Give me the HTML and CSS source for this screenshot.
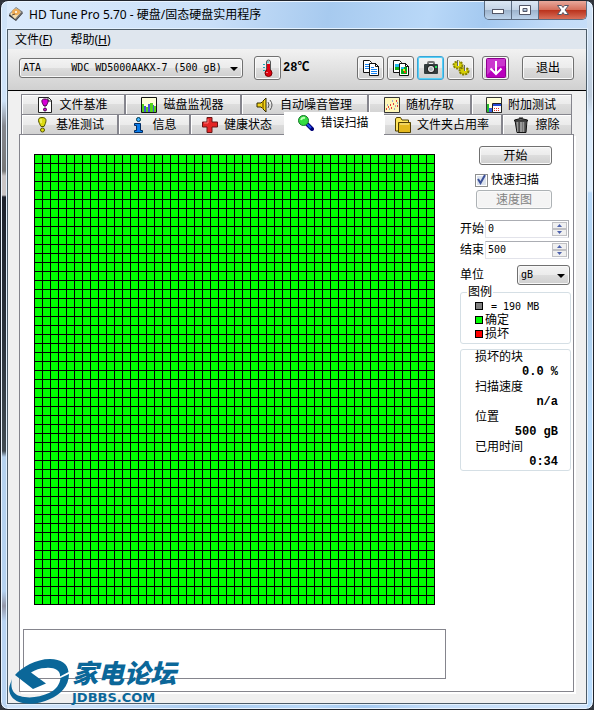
FILE: index.html
```html
<!DOCTYPE html>
<html lang="zh-CN">
<head>
<meta charset="utf-8">
<title>HD Tune Pro 5.70</title>
<link rel="stylesheet" href="styles.css">
</head>
<body>
<div class="window">
  <header class="titlebar">
    <svg class="app-icon" viewBox="0 0 16 16"><path d="M1 9 8 2l7 5-7 8-7-5z" fill="#333"/><path d="M1 8 8 1l7 5-7 8z" fill="#777"/><path d="M2 8 8 2l5 4-6 7z" fill="#f3dcae"/><ellipse cx="8" cy="6" rx="4" ry="3" fill="#edaa54"/><circle cx="8" cy="6" r="1" fill="#fff"/><path d="m4 9 3-1" stroke="#654" stroke-width="1"/></svg>
    <h1>HD Tune Pro 5.70 - 硬盘/固态硬盘实用程序</h1>
    <div class="controls">
      <button aria-label="最小化"><svg viewBox="0 0 14 12"><rect x="1.500" y="5.500" width="11" height="4" fill="#fff" stroke="#535666"/></svg></button>
      <button aria-label="最大化"><svg viewBox="0 0 14 12"><path fill-rule="evenodd" d="M1.500 1.500h11v9h-11zm3.500 3v3h4v-3z" fill="#fff" stroke="#535666"/></svg></button>
      <button class="close" aria-label="关闭"><svg viewBox="0 0 14 12"><path d="M1.500 1.500h4L7 3.500l1.500-2h4L9 6l3.500 4.500h-4L7 8.500l-1.500 2h-4L5 6z" fill="#fff" stroke="#535666"/></svg></button>
    </div>
  </header>
  <main class="client">
    <nav class="menu"><button>文件(<u>F</u>)</button><button>帮助(<u>H</u>)</button></nav>
    <div class="toolbar">
      <div class="combo drive">
        <select aria-label="硬盘"><option>ATA&nbsp;&nbsp;&nbsp;&nbsp;&nbsp;WDC WD5000AAKX-7 (500 gB)</option></select>
        <svg viewBox="0 0 8 4"><path d="M0 0h8L4 4z"/></svg>
      </div>
      <button class="tool" aria-label="温度"><svg viewBox="0 0 16 18"><rect x="6.500" y="1" width="4" height="12" rx="2" fill="#ddd" stroke="#555"/><circle cx="8.500" cy="14" r="3.500" fill="#e00010" stroke="#700"/><path d="M8.500 5v9" stroke="#e00010" stroke-width="3"/><path d="M3 5.500h2M3 8.500h2M3 11.500h2" stroke="#18a7b5"/><path d="M8 2v2" stroke="#21c2d0"/><path d="M7 13v1" stroke="#fff"/></svg></button>
      <span class="temp">28℃</span>
      <div class="tools">
        <button class="tool" aria-label="复制文本"><svg viewBox="0 0 18 16"><path d="M1.500.5h6l2 2v10h-8z" fill="#fff" stroke="#111"/><path d="M3 4.500h4M3 6.500h4M3 8.500h4" stroke="#1683f3"/><path d="M7.500 3.500h6l3 3v9h-9z" fill="#fff" stroke="#111"/><path d="M13.500 3v3.500H17" fill="none" stroke="#111"/><path d="M9 7.500h3M9 9.500h6M9 11.500h6M9 13.500h6" stroke="#1683f3"/></svg></button>
        <button class="tool" aria-label="复制图像"><svg viewBox="0 0 18 16"><path d="M1.500.5h6l2 2v10h-8z" fill="#fff" stroke="#111"/><path d="M3 4h4v6H3z" fill="#25b9ed"/><path d="M3 7h4v3H3z" fill="#13af18"/><path d="M7.500 3.500h6l3 3v9h-9z" fill="#fff" stroke="#111"/><path d="M13.500 3v3.500H17" fill="none" stroke="#111"/><path d="M9 7h6v7H9z" fill="#09aa19"/><path d="M9 7h3v2H9z" fill="#25b9ed"/><path d="M11 9h2v2h-2z" fill="#f2dd16"/><path d="M12 11h2v2h-2z" fill="#ed3a12"/></svg></button>
        <button class="tool focused" aria-label="截图"><svg viewBox="0 0 18 16"><path d="M6 5V3q0-1 1-1h4q1 0 1 1v2" fill="none" stroke="#777" stroke-width="2"/><rect x="2" y="4" width="14" height="10" rx="1" fill="#333c3d"/><circle cx="9" cy="9" r="4" fill="#222"/><circle cx="9" cy="9" r="3" fill="#eee"/><circle cx="9" cy="9" r="2" fill="#aeb8bb"/><path d="M13 6h2v2h-2z" fill="#1ee35b"/></svg></button>
        <button class="tool" aria-label="选项"><svg viewBox="0 0 18 16"><ellipse cx="6" cy="5" rx="4.500" ry="3.500" fill="#d6cf05"/><ellipse cx="6" cy="5" rx="4.500" ry="3.500" fill="none" stroke="#898500" stroke-width="2" stroke-dasharray="2 1"/><ellipse cx="12" cy="11" rx="4.500" ry="3.500" fill="#d6cf05"/><ellipse cx="12" cy="11" rx="4.500" ry="3.500" fill="none" stroke="#817b00" stroke-width="2" stroke-dasharray="2 1"/><path d="M5.500 0v6M12.500 5v6" stroke="#666"/><path d="M6.500 1v5M13.500 6v5" stroke="#eee"/></svg></button>
        <button class="tool save" aria-label="保存"><svg viewBox="0 0 20 20"><rect x=".5" y=".5" width="19" height="19" rx="1" fill="#b900bd" stroke="#8e008f"/><path d="M1 1h18v7Q8 8 1 17z" fill="#d65cd8" opacity=".6"/><path d="M10 3v12M4.500 10.500 10 16l5.500-5.500" fill="none" stroke="#fff" stroke-width="2"/></svg></button>
        <button class="exit">退出</button>
      </div>
    </div>
    <section class="body">
      <div class="tabs" role="tablist">
        <div class="tab-row first">
          <button role="tab"><svg viewBox="0 0 16 16"><path d="M1.500.5h10l3 3v12h-13z" fill="#fff" stroke="#222"/><path d="M11 0v4h4" fill="none" stroke="#222"/><path d="M8 2c5 0 3 4 1 7H7C5 6 3 2 8 2z" fill="#d900d8" stroke="#410041"/><circle cx="8" cy="12.500" r="1.500" fill="#d900d8" stroke="#410041"/></svg>文件基准</button>
          <button role="tab"><svg viewBox="0 0 16 16"><path d="M.5.5h15v15H.5z" fill="#ffffd8" stroke="#111"/><path d="M1 7h2v8H1zM5 10h2v5H5zM9 6h3v9H9zM13 9h2v6h-2z" fill="#53d31a"/><path d="M3 9h2v6H3zM7 7h2v8H7zM12 8h1v7h-1z" fill="#4750d8"/></svg>磁盘监视器</button>
          <button role="tab"><svg class="speaker" viewBox="0 0 18 16"><path d="M1 6h4l5-5v14L5 10H1z" fill="#f4d51c" stroke="#332a00"/><path d="M7 4v8" stroke="#a88700" stroke-width="2"/><path d="M12 5q2 3 0 6M14 3q4 5 0 10" fill="none" stroke="#555"/></svg>自动噪音管理</button>
          <button role="tab"><svg viewBox="0 0 16 16"><path d="M.5.5h15v15H.5z" fill="#fff8b8" stroke="#333"/><path d="M2 12h1M4 10h1M7 11h1M6 8h1M9 7h1M12 4h1M13 9h1" stroke="#e04040" stroke-width="2"/><path d="M3 8h1M5 12h1M8 4h1M11 9h1M13 6h1M10 12h1" stroke="#405bdc"/></svg>随机存取</button>
          <button role="tab"><svg viewBox="0 0 16 16"><path d="M.5.5h15v15H.5z" fill="#ffffd8" stroke="#333"/><path d="M1 7h2v8H1z" fill="#22bd2c"/><path d="M3 11h3v4H3z" fill="#345de1"/><path d="M6.500 6.500h9v9h-9z" fill="#fff" stroke="#222"/><path d="M7 7h8v2H7z" fill="#254bd5"/><path d="M8 11.500h1m1 0h1m1 0h1M8 13.500h1m1 0h1m1 0h1" stroke="#d32"/></svg>附加测试</button>
        </div>
        <div class="tab-row second">
          <button role="tab"><svg viewBox="0 0 16 16"><path d="M8 .5c6 0 4 5 2 9H7C5 6 2 .5 8 .5z" fill="#dcdb13" stroke="#555300"/><circle cx="8.500" cy="13" r="2" fill="#dcdb13" stroke="#555300"/><path d="M7 2v4" stroke="#ffffa0"/></svg>基准测试</button>
          <button role="tab"><svg viewBox="0 0 16 16"><circle cx="8.500" cy="2.500" r="2" fill="#43b7ff" stroke="#034"/><path d="M4.500 6.500h6v7h2v2h-8v-2h2v-5h-2z" fill="#087bea" stroke="#002b62"/></svg>信息</button>
          <button role="tab"><svg viewBox="0 0 16 16"><path d="M5 .5h5V5h5.500v5H10v5.500H5V10H.5V5H5z" fill="#e32626" stroke="#671616"/><path d="M6 2v4H2" fill="none" stroke="#ff7878"/></svg>健康状态</button>
          <button role="tab" class="selected" aria-selected="true"><svg viewBox="0 0 16 16"><path d="m9 9 5 5" stroke="#000078" stroke-width="4" stroke-linecap="round"/><path d="m8 8 5 5" stroke="#234bed" stroke-width="2"/><circle cx="5.500" cy="5.500" r="5" fill="#35dc42" stroke="#157529"/><path d="M3 5q1-3 4-2" fill="none" stroke="#bcffb6" stroke-width="2"/></svg>错误扫描</button>
          <button role="tab"><svg viewBox="0 0 16 16"><path d="M.5 14V2l1-1.500h4L7 3h6.500v11z" fill="#ffe45b" stroke="#514100"/><path d="M3.500 5.500h12v10h-12z" fill="#e4b81e" stroke="#514100"/><path d="M5 7h9" stroke="#fff1a5"/></svg>文件夹占用率</button>
          <button role="tab"><svg viewBox="0 0 16 16"><path d="M2 3.500h12l-1 12H4z" fill="#777" stroke="#111"/><path d="M1.500 3q6-3 13 0v1h-13zM6 1h4" fill="#666" stroke="#111"/><path d="M5 5v10M8 5v10M11 5v10" stroke="#bbb"/><path d="M6 5v10M12 5v10" stroke="#222"/></svg>擦除</button>
        </div>
      </div>
      <div class="panel">
        <div class="scan">
          <div class="map" role="img" aria-label="错误扫描"></div>
          <textarea class="log" aria-label="日志" readonly></textarea>
        </div>
        <aside class="side">
          <button class="btn start">开始</button>
          <label class="quick"><input type="checkbox" checked><svg viewBox="0 0 13 13"><path d="M3 6l2.500 4L10 2" fill="none" stroke="#3c5199" stroke-width="2"/></svg>快速扫描</label>
          <button class="btn speed" disabled>速度图</button>
          <div class="field"><label for="from">开始</label><div class="spin"><input id="from" type="text" value="0"><span class="arrows"><button aria-label="开始增加"><svg viewBox="0 0 5 3"><path d="M0 3h5L2.500 0z"/></svg></button><button aria-label="开始减少"><svg viewBox="0 0 5 3"><path d="M0 0h5L2.500 3z"/></svg></button></span></div></div>
          <div class="field"><label for="to">结束</label><div class="spin"><input id="to" type="text" value="500"><span class="arrows"><button aria-label="结束增加"><svg viewBox="0 0 5 3"><path d="M0 3h5L2.500 0z"/></svg></button><button aria-label="结束减少"><svg viewBox="0 0 5 3"><path d="M0 0h5L2.500 3z"/></svg></button></span></div></div>
          <div class="field unit"><label for="unit">单位</label><div class="combo"><select id="unit"><option>gB</option></select><svg viewBox="0 0 8 4"><path d="M0 0h8L4 4z"/></svg></div></div>
          <fieldset class="legend">
            <legend>图例</legend>
            <ul><li><i class="swatch"></i><span class="mono">&nbsp;= 190 MB</span></li><li><i class="swatch ok"></i>确定</li><li><i class="swatch bad"></i>损坏</li></ul>
          </fieldset>
          <dl class="stats">
            <dt>损坏的块</dt><dd>0.0 %</dd>
            <dt>扫描速度</dt><dd>n/a</dd>
            <dt>位置</dt><dd>500 gB</dd>
            <dt>已用时间</dt><dd>0:34</dd>
          </dl>
        </aside>
      </div>
    </section>
  </main>
  <div class="watermark">
    <svg viewBox="0 0 62 46"><path fill="#0b6799" d="M7 17C14 9 28 1 42 1c11 0 18 5 18.500 13L52 18.500C53 12 45 9 38 10c-6 0-11 2-15 4.500L38 25.500 25 31z"/><path fill="#0b6799" d="M61 16c0 12-9 21-19 25-10 5-22 6-31 3C3 41 0 34 1.500 28L4 21c-2 9 1 15 8 17 9 3 20 1 29-3 7-3 11-9 11.500-15z"/></svg>
    <div><strong>家电论坛</strong><b>JDBBS.COM</b></div>
  </div>
</div>
</body>
</html>
```
FILE: styles.css
```css
* { box-sizing: border-box; }
body {
  margin: 0;
  background: #30343c;
  color: #000;
  font: 12px/14px "Liberation Sans", "Noto Sans CJK SC", sans-serif;
}
button, input, select, textarea { font: inherit; color: inherit; margin: 0; padding: 0; }
button { border: 0; background: none; }
svg { display: block; flex: none; }

.window {
  position: relative;
  display: flex;
  flex-direction: column;
  min-height: 100vh;
  padding: 0 6px 5px;
  border: 1px solid #20242c;
  border-radius: 8px;
  background:
    linear-gradient(#cfe3f8 0, #cfe3f8 100px, #85888f 125px, #777 170px, #c9c5c5 175px, #c9c5c5 194px, #1d222c 196px, #2b333c 340px, #414b52 450px, #b6d2ee 456px, #b5d2f0 590px, #9397a8 605px, #b9d4f2 620px) left / 6px 100% no-repeat,
    linear-gradient(#d3e6fa 0, #bfcddd 95px, #d8e9fb 115px, #ddeefe 190px, #b9dafa 192px, #a9cbe9 300px, #b9dcfd 420px) right / 6px 100% no-repeat,
    linear-gradient(100deg, #dcebfc 0, #c9dff8 30%, #a7caef 46%, #b9d8f8 60%, #a4c9f0 68%, #c3dcf8 78%, #cfe4fb 100%);
  box-shadow: inset 0 0 0 1px #eaf4ff;
}
.titlebar { display: flex; align-items: flex-start; height: 28px; }
.app-icon { width: 16px; height: 16px; margin: 5px 5px 0 1px; }
h1 { margin: 6px 0 0; font: 12px/16px "Noto Sans", "Noto Sans CJK SC", sans-serif; }
.controls {
  display: flex;
  height: 19px;
  margin-left: auto;
  border: 1px solid #5b6b80;
  border-top: 0;
  border-radius: 0 0 5px 5px;
  overflow: hidden;
}
.controls button {
  display: flex;
  align-items: center;
  justify-content: center;
  width: 27px;
  border-right: 1px solid #5b6b80;
  background: linear-gradient(#dce7f4 0, #c4d3e5 48%, #9db3cc 50%, #bdd3eb);
}
.controls .close { width: 47px; border: 0; background: linear-gradient(#e8a99c 0, #d5705c 48%, #b9301a 50%, #d8705a); }
.controls svg { width: 14px; height: 12px; }

.client {
  display: flex;
  flex: 1;
  flex-direction: column;
  border: 1px solid #4d5c68;
  background: #f0f0f0;
  box-shadow: 0 0 0 1px #e3f1ff;
}
.menu { display: flex; gap: 18px; height: 19px; padding-left: 7px; background: #dfe6ee; }
.menu button { font: 12px/19px "Noto Sans", "Noto Sans CJK SC", sans-serif; }
.toolbar {
  display: flex;
  align-items: center;
  height: 42px;
  padding: 0 12px 3px 11px;
  border-bottom: 1px solid #000;
  background: linear-gradient(#f2f2f2, #d0d0d0);
}
.combo {
  position: relative;
  height: 20px;
  border: 1px solid #707070;
  border-radius: 3px;
  background: linear-gradient(#f3f3f3, #ebebeb 50%, #dddddd 50%, #cfcfcf);
  box-shadow: inset 0 0 0 1px #f8f8f8;
}
.combo select {
  display: block;
  width: 100%;
  height: 100%;
  padding-left: 3px;
  border: 0;
  appearance: none;
  background: none;
  font: 10px/18px "DejaVu Sans Mono", monospace;
}
.combo svg { position: absolute; right: 4px; top: 8px; width: 8px; height: 4px; pointer-events: none; }
.drive { width: 224px; }
.tool, .exit, .btn {
  display: flex;
  align-items: center;
  justify-content: center;
  border: 1px solid #707070;
  border-radius: 3px;
  background: linear-gradient(#f4f4f4, #ebebeb 50%, #dddddd 50%, #cfcfcf);
  box-shadow: inset 0 0 0 1px #fafafa;
}
.tool { width: 27px; height: 24px; }
.tool svg { width: 18px; height: 16px; }
.drive + .tool { margin-left: 11px; }
.drive + .tool svg { width: 16px; height: 18px; }
.focused { border-color: #3aa5d8; box-shadow: inset 0 0 0 1px #55d0f6; }
.tool.save { margin-left: 5px; }
.save svg { width: 20px; height: 20px; }
.temp { margin-left: 2px; font: bold 12px/14px "Liberation Mono", "Noto Sans CJK SC", monospace; }
.tools { display: flex; gap: 3px; margin-left: auto; }
.exit { width: 52px; height: 24px; margin-left: 10px; }

.body { display: flex; flex: 1; flex-direction: column; padding: 3px 12px 11px 11px; }
.tabs { padding: 0 2px; }
.tab-row { display: grid; height: 20px; border-left: 1px solid #85858d; }
.first { grid-template-columns: 104fr 116fr 127fr 103fr 100fr; }
.second { grid-template-columns: 97fr 72fr 95fr 98fr 119fr 69fr; }
.tab-row button {
  display: flex;
  align-items: center;
  justify-content: center;
  gap: 6px;
  min-width: 0;
  padding-right: 1px;
  border: solid #85858d;
  border-width: 1px 2px 0 0;
  background: linear-gradient(#f3f3f3, #ebebeb 50%, #dddddd 50%, #d2d2d2);
  box-shadow: inset 1px 1px #fff;
  white-space: nowrap;
}
.tab-row button:last-child { border-right-width: 1px; }
.tab-row svg { width: 16px; height: 16px; }
.tab-row .speaker { width: 18px; }
.tab-row .selected {
  z-index: 1;
  height: 23px;
  margin: -2px 0 -1px -2px;
  padding-bottom: 2px;
  border-width: 0;
  background: #fff;
  box-shadow: none;
}
.panel {
  display: flex;
  flex: 1;
  justify-content: space-between;
  padding: 0 2px 12px 3px;
  border: 1px solid #85858d;
  background: #fff;
  box-shadow: 2px 2px #fff;
}
.scan { display: flex; flex-direction: column; justify-content: space-between; width: 423px; }
.map {
  width: 401px;
  height: 451px;
  margin: 19px 0 0 11px;
  background:
    linear-gradient(90deg, #000 1px, transparent 1px) 0 0 / 8px 9px,
    linear-gradient(#000 1px, #00ff00 1px) 0 0 / 8px 9px;
}
.log { display: block; width: 100%; height: 50px; border: 1px solid #85858d; border-radius: 0; background: #fff; resize: none; }
.side { width: 111px; padding-top: 11px; }
.btn { height: 19px; }
.start { width: 73px; margin-left: 19px; }
.quick { position: relative; display: flex; align-items: center; gap: 3px; height: 14px; margin: 8px 0 3px 15px; }
.quick input { width: 13px; height: 13px; border: 1px solid #8e8f8f; appearance: none; background: #dce3ee; box-shadow: inset 0 0 0 1px #fff; }
.quick svg { position: absolute; left: 0; top: 0; width: 13px; height: 13px; }
.speed { width: 76px; margin: 0 0 11px 16px; border-color: #adb2b5; background: #f4f4f4; color: #838383; }
.field { display: flex; align-items: center; gap: 1px; height: 18px; margin-bottom: 3px; }
.field label { flex: none; }
.spin { display: flex; width: 84px; height: 18px; padding: 1px; border: 1px solid #e2e3ea; border-top-color: #abadb3; border-right-color: #abadb3; }
.spin input { flex: 1; min-width: 0; border: 0; padding-left: 1px; outline: 0; font: 10px/14px "DejaVu Sans Mono", monospace; }
.arrows { display: flex; flex-direction: column; width: 15px; }
.arrows button { display: flex; flex: 1; align-items: center; justify-content: center; border: 1px solid #c0c0c4; background: #f0f0f0; }
.arrows svg { width: 5px; height: 3px; fill: #4e62ad; }
.unit { height: 20px; margin: 6px 0 0; justify-content: space-between; padding-right: 1px; }
.unit .combo { width: 53px; }
.legend { min-width: 0; margin: 0; padding: 0 0 2px 14px; border: 1px solid #d5dfe5; border-radius: 3px; }
.legend legend { margin-left: -8px; padding: 0 1px; }
.legend ul { margin: 0; padding: 0; list-style: none; line-height: 13px; }
.legend li { display: flex; align-items: center; gap: 2px; height: 14px; }
.mono { font: 10px/13px "DejaVu Sans Mono", monospace; }
.swatch { width: 8px; height: 8px; border: 1px solid #000; background: #808080; }
.ok { background: #00ff00; }
.bad { background: #ff0000; }
.stats { margin: 5px 0 0; padding: 0 12px 0 14px; border: 1px solid #d5dfe5; border-radius: 3px; }
.stats dt { line-height: 15px; }
.stats dd { margin: 0; font: bold 12px/15px "Liberation Mono", monospace; text-align: right; }

.watermark { position: absolute; left: 7px; bottom: 5px; display: flex; align-items: flex-end; color: #0b6799; pointer-events: none; }
.watermark > svg { width: 62px; height: 46px; }
.watermark div { display: flex; flex-direction: column; gap: 6px; margin-left: 2px; }
.watermark strong { font: italic 900 26px/28px "Noto Sans CJK SC", sans-serif; }
.watermark b { font: bold 13px/12px "DejaVu Sans", sans-serif; }
```
